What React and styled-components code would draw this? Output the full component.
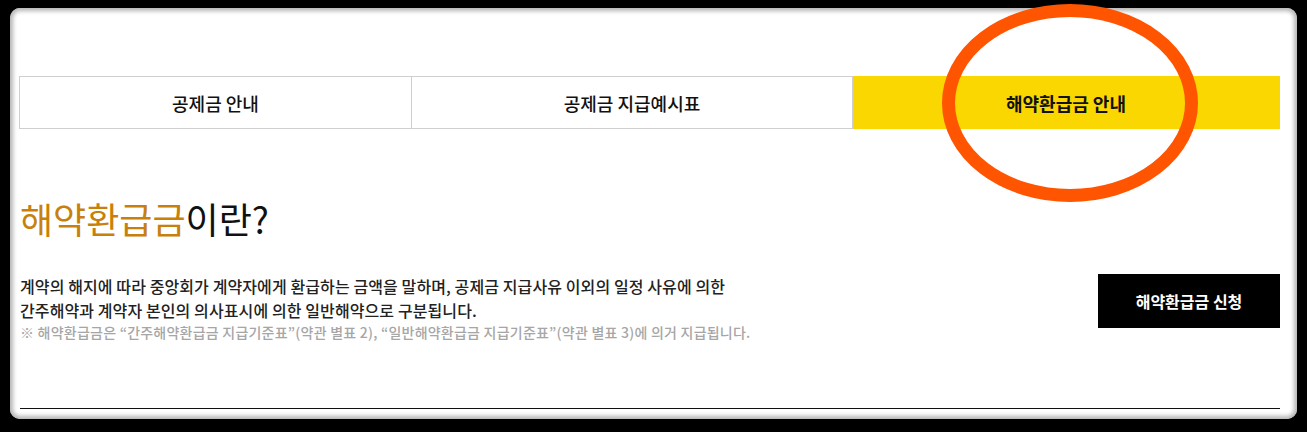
import React from "react";
import styled, { createGlobalStyle } from "styled-components";

const GlobalStyle = createGlobalStyle`
  html, body { margin: 0; padding: 0; background: #000; }
  body { font-family: "Noto Sans CJK KR", "Noto Sans", sans-serif; }
  * { box-sizing: border-box; }
`;

const Frame = styled.div`
  width: 1307px;
  height: 432px;
  padding: 8px 10px 13px 10px;
  background: #000;
`;

const Panel = styled.div`
  position: relative;
  height: 100%;
  background: #fff;
  border-radius: 10px;
  box-shadow: inset 0 0 4px 3px #b5b5b5;
  padding: 68px 17px 0 9px;
`;

const Tabs = styled.div`
  display: grid;
  grid-template-columns: 393px 441px 427px;
  height: 53px;
`;

const Tab = styled.div`
  display: flex;
  align-items: center;
  justify-content: center;
  font-size: 18px;
  font-weight: ${(p) => (p.$active ? 700 : 500)};
  color: #111;
  background: ${(p) => (p.$active ? "#fad700" : "#fff")};
  border: 1px solid ${(p) => (p.$active ? "#fad700" : "#cfcfcf")};
  border-left-width: ${(p) => (p.$first ? "1px" : "0")};
`;

const Heading = styled.h2`
  margin: 69px 0 0 1px;
  font-size: 36px;
  line-height: 40px;
  font-weight: 400;
  color: #111;
`;

const Accent = styled.span`
  color: #c8800c;
`;

const InfoRow = styled.div`
  display: flex;
  justify-content: space-between;
  align-items: flex-start;
  margin-top: 36px;
  padding-left: 1px;
`;

const Desc = styled.div`
  display: flex;
  flex-direction: column;
`;

const Line = styled.p`
  margin: 0;
  font-size: 16px;
  line-height: 24px;
  font-weight: 500;
  letter-spacing: 0.1px;
  color: #222;
`;

const Note = styled.p`
  margin: 0;
  font-size: 14px;
  line-height: 20px;
  letter-spacing: 0.23px;
  font-weight: 500;
  color: #a6a6a6;
`;

const ApplyButton = styled.button`
  width: 182px;
  height: 54px;
  border: 0;
  background: #000;
  color: #fff;
  font-family: inherit;
  font-size: 16px;
  font-weight: 700;
  cursor: pointer;
`;

const Divider = styled.hr`
  margin: 66px 0 0 1px;
  border: 0;
  border-top: 1px solid #111;
`;

const Annotation = styled.svg`
  position: absolute;
  left: 922px;
  top: -8px;
  pointer-events: none;
`;

export default function App() {
  return (
    <>
      <GlobalStyle />
      <Frame>
        <Panel>
          <Tabs>
            <Tab $first>공제금 안내</Tab>
            <Tab>공제금 지급예시표</Tab>
            <Tab $active>해약환급금 안내</Tab>
          </Tabs>
          <Heading>
            <Accent>해약환급금</Accent>이란?
          </Heading>
          <InfoRow>
            <Desc>
              <Line>계약의 해지에 따라 중앙회가 계약자에게 환급하는 금액을 말하며, 공제금 지급사유 이외의 일정 사유에 의한</Line>
              <Line>간주해약과 계약자 본인의 의사표시에 의한 일반해약으로 구분됩니다.</Line>
              <Note>※ 해약환급금은 “간주해약환급금 지급기준표”(약관 별표 2), “일반해약환급금 지급기준표”(약관 별표 3)에 의거 지급됩니다.</Note>
            </Desc>
            <ApplyButton>해약환급금 신청</ApplyButton>
          </InfoRow>
          <Divider />
          <Annotation width="280" height="220" viewBox="0 0 280 220">
            <ellipse cx="138" cy="103" rx="121.5" ry="92.5" fill="none" stroke="#ff5500" strokeWidth="13" />
          </Annotation>
        </Panel>
      </Frame>
    </>
  );
}
